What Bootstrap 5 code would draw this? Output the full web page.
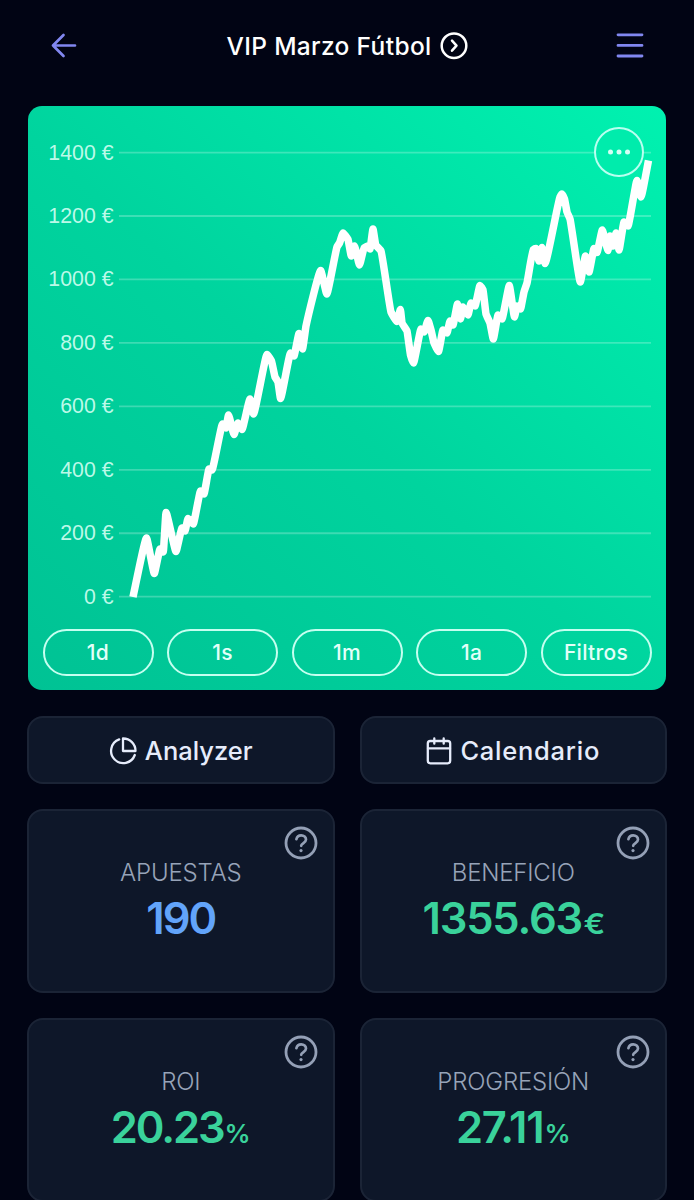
<!DOCTYPE html>
<html lang="es">
<head>
<meta charset="utf-8">
<meta name="viewport" content="width=device-width, initial-scale=1">
<title>VIP Marzo Fútbol</title>
<link href="https://cdn.jsdelivr.net/npm/bootstrap@5.3.0/dist/css/bootstrap.min.css" rel="stylesheet">
<style>
html,body{height:1200px;overflow:hidden}
body{background:#010414;color:#fff;font-family:Inter,sans-serif;width:694px}
svg{display:block;flex:none}
.topbar{height:106px;padding:0 50px 15px}
.topbar .accent{color:#8187f0}
.title-txt{font-size:24.5px;font-weight:500;letter-spacing:.35px;line-height:30px}
.chart-card{margin:0 28px;width:637.5px;height:583.5px;border-radius:14px;background:linear-gradient(42deg,#00c294 0%,#00d49e 48%,#00f2b0 100%)}
.axis{font:21.3px "Liberation Sans",sans-serif;fill:#d6fff3;fill-opacity:.9}
.pills{padding:0 14px 0 14.5px;gap:13.5px}
.pill{flex:1 1 0;height:47px;border:2px solid #c5fff0;color:#e3fff9;font-size:21px;font-weight:500;border-radius:24px;padding:0;letter-spacing:.3px}
.more{left:566px;top:21px;width:50px;height:50px;border:2px solid #b9fff0;background:#00ecac;border-radius:50%;padding:0}
.tiles{display:grid;grid-template-columns:307.5px 307.5px;column-gap:25px;row-gap:25.5px;margin:26.5px 0 0 27px}
.tile{background:#0e1729;border:2px solid #1b2436;border-radius:16px;color:#e6ecfb}
.tool{height:67.5px;font-size:25.5px;font-weight:500;gap:8px;padding:2px 0 0}
.stat{height:183.5px;padding-top:44px}
.help{right:15px;top:14.5px;color:#94a0b6}
.stat-name{font-size:24px;line-height:36px;font-weight:300;color:#97a3b8;letter-spacing:-.2px}
.stat-num{font-size:43.5px;line-height:54px;font-weight:600;color:#3ad29b;letter-spacing:-1.2px}
.stat-num small{font-size:28px;font-weight:600;letter-spacing:0;margin-left:1px}
.stat-num .euro{display:inline-block;transform:scaleX(1.15);margin-left:3px}
.stat-num .pct{font-size:26px}
.stat-num.blue{color:#62a4fa;letter-spacing:-2px}
.stat-num.tight{letter-spacing:-2.1px}
.narrow-txt{letter-spacing:0}
.wide-txt{letter-spacing:.75px}
</style>
</head>
<body>
<svg class="d-none"><symbol id="q" viewBox="0 0 34 34"><g fill="none" stroke="currentColor" stroke-linecap="round"><circle cx="17" cy="17" r="15" stroke-width="2.8"/><path d="M12.4 13.2C13 10.5 15 9.3 17.2 9.3c2.7 0 4.8 1.8 4.8 4.3 0 3.4-4.8 4-4.8 6.2" stroke-width="2.7"/></g><circle cx="17" cy="24.6" r="1.6" fill="currentColor"/></symbol></svg>
<header class="topbar d-flex align-items-center justify-content-between">
  <svg class="accent" width="28" height="28" viewBox="0 0 28 28" fill="none" stroke="currentColor" stroke-width="2.7" stroke-linecap="round" stroke-linejoin="round"><path d="M25 13.5H3M13.5 3 3 13.5 13.5 24"/></svg>
  <div class="d-flex align-items-center gap-2"><span class="title-txt">VIP Marzo Fútbol</span>
  <svg width="28" height="28" viewBox="0 0 28 28" fill="none" stroke="#fff" stroke-width="2.5" stroke-linecap="round" stroke-linejoin="round"><circle cx="14" cy="13.7" r="12.3"/><path d="m12 8.7 4.5 5-4.5 5"/></svg></div>
  <svg class="accent" width="28" height="28" viewBox="0 0 28 28" stroke="currentColor" stroke-width="2.8" stroke-linecap="round"><path d="M2 2.8h24M2 13.4h24M2 24h24"/></svg>
</header>
<main>
<section class="chart-card position-relative d-flex flex-column">
  <svg id="chart" width="637" height="523" viewBox="28 106 637 523"><g id="grid"></g><path id="curve" fill="none" stroke="#fff" stroke-width="7.5" stroke-linejoin="round"/></svg>
  <div class="pills d-flex">
    <button class="btn pill">1d</button><button class="btn pill">1s</button><button class="btn pill">1m</button><button class="btn pill">1a</button><button class="btn pill">Filtros</button>
  </div>
  <button class="btn more position-absolute d-flex align-items-center justify-content-center"><svg width="24" height="6" viewBox="0 0 24 6" fill="#d5fff5"><circle cx="3.5" cy="3" r="2.5"/><circle cx="12" cy="3" r="2.5"/><circle cx="20.5" cy="3" r="2.5"/></svg></button>
</section>
<section class="tiles">
  <button class="btn tile tool d-flex align-items-center justify-content-center"><svg width="28" height="28" viewBox="0 0 28 28" fill="none" stroke="currentColor" stroke-width="2.3" stroke-linecap="round" stroke-linejoin="round"><path d="M10.2 2.4A12.2 12.2 0 1 0 25.8 18"/><path d="M14 1.5A12.3 12.3 0 0 1 26.5 14H14z"/></svg><span class="narrow-txt">Analyzer</span></button>
  <button class="btn tile tool d-flex align-items-center justify-content-center"><svg width="26" height="28" viewBox="0 0 26 28" fill="none" stroke="currentColor" stroke-width="2.3" stroke-linecap="round" stroke-linejoin="round"><rect x="1.8" y="4" width="22.4" height="22.3" rx="2.5"/><path d="M2 11.3h22M8.3 1.5v5.2M17.7 1.5v5.2"/></svg><span class="wide-txt">Calendario</span></button>
  <article class="tile stat position-relative text-center"><svg class="help position-absolute" width="34" height="34"><use href="#q"/></svg><div class="stat-name">APUESTAS</div><div class="stat-num blue">190</div></article>
  <article class="tile stat position-relative text-center"><svg class="help position-absolute" width="34" height="34"><use href="#q"/></svg><div class="stat-name">BENEFICIO</div><div class="stat-num">1355.63<small class="euro">€</small></div></article>
  <article class="tile stat position-relative text-center"><svg class="help position-absolute" width="34" height="34"><use href="#q"/></svg><div class="stat-name">ROI</div><div class="stat-num tight">20.23<small class="pct">%</small></div></article>
  <article class="tile stat position-relative text-center"><svg class="help position-absolute" width="34" height="34"><use href="#q"/></svg><div class="stat-name">PROGRESIÓN</div><div class="stat-num">27.11<small class="pct">%</small></div></article>
</section>
</main>
<script src="https://cdn.jsdelivr.net/npm/bootstrap@5.3.0/dist/js/bootstrap.bundle.min.js"></script>
<script>
// Horizontal grid with euro labels
let g='';
for(let i=0;i<8;i++){const y=596.7-i*63.45;
 g+=`<path d="M119 ${y}H651" stroke="#fff" stroke-opacity=".24" stroke-width="1.8"/><text class="axis" x="113.5" y="${y+7}" text-anchor="end">${i*200} €</text>`}
document.getElementById('grid').innerHTML=g;
// Profit series, nearly straight segments with softened turns
const p=[[133,597],[146.5,538],[154.3,573.5],[160,549],[163.3,552],[166,512.5],[176,551.5],[182,528],[185,531],[188,518.5],[193.3,524],[200.5,491],[204,494],[209,469],[212,470],[222.5,424],[226,428],[228.5,415],[234,434.5],[238,423],[242,429.5],[250,399],[253.5,414],[267,354.5],[271.5,361],[275,377],[278,382],[280.5,398.5],[290.5,353],[294,356],[299,333.5],[302.5,349],[306,326],[320.7,270.5],[326.8,294],[337,247],[339.5,243],[343,233],[348,239.5],[351.3,256],[354.5,246],[359.5,265],[364,248],[368,246],[370,249],[373,229],[375.7,245],[381,251],[391,312],[397,321.5],[400.4,309.5],[402,323],[407,331],[410.5,355],[413.5,363],[421,329],[424,332],[428,320.5],[431,330],[434,343],[438.5,351.5],[443,330],[447,333],[450,321],[453,325],[457.5,304],[460.5,319],[463,307],[468,315],[471,303],[475,306],[480,285.5],[483,290],[486,314],[490,323],[493.3,339],[498,315],[502,319],[509.3,285.5],[514.5,317],[517,306],[520.5,309],[524,292],[527,283],[533,250],[536,248.5],[539,261],[542,247.5],[545,263.5],[560,197],[562,194],[564.5,199],[567,212],[570,219],[580.3,282],[585.5,256],[589,272],[594,248.5],[597,252.5],[602.3,230],[608,250.5],[610,236],[613,246],[616,233],[619,250],[624,222],[628,226],[637,180.5],[641,197],[648.5,160.5]];
const n=p.length,s=[],m=[];
for(let i=0;i<n-1;i++)s[i]=(p[i+1][1]-p[i][1])/(p[i+1][0]-p[i][0]);
m[0]=s[0];m[n-1]=s[n-2];
for(let i=1;i<n-1;i++)m[i]=s[i-1]*s[i]<=0?0:2*s[i-1]*s[i]/(s[i-1]+s[i]);
let d='M'+p[0];
for(let i=0;i<n-1;i++){const h=(p[i+1][0]-p[i][0])*.12;
 d+=`C${p[i][0]+h},${p[i][1]+m[i]*h} ${p[i+1][0]-h},${p[i+1][1]-m[i+1]*h} ${p[i+1]}`}
document.getElementById('curve').setAttribute('d',d);
</script>
</body>
</html>
